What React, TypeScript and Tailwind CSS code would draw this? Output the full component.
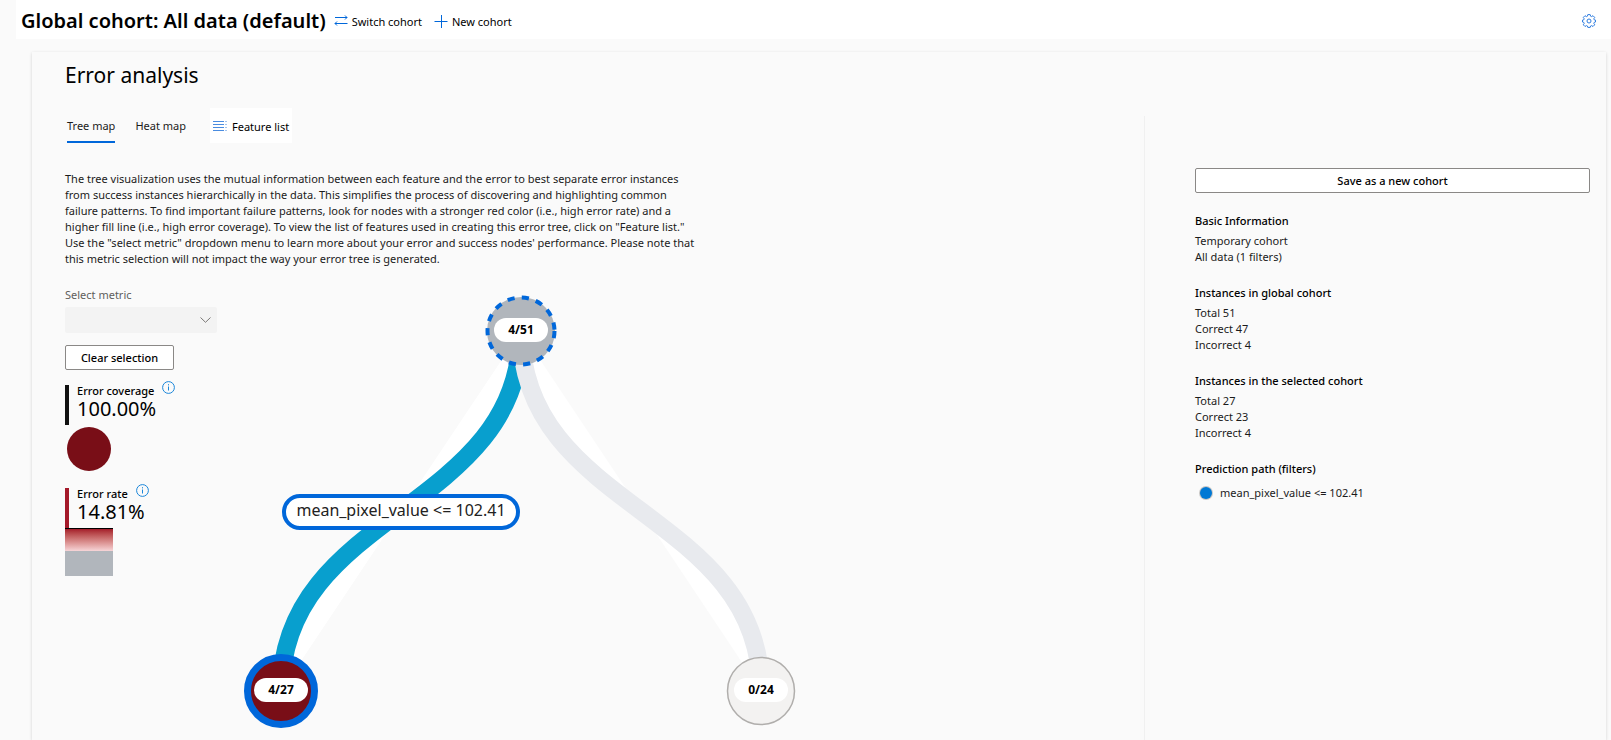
import React from "react";

type Point = { x: number; y: number };

const root: Point = { x: 300, y: 44 };
const left: Point = { x: 60, y: 404 };
const right: Point = { x: 540, y: 404 };

function linkPath(a: Point, b: Point) {
  const mid = (a.y + b.y) / 2;
  return `M${a.x},${a.y}C${a.x},${mid} ${b.x},${mid} ${b.x},${b.y}`;
}

function SwitchIcon() {
  return (
    <svg width="14" height="14" viewBox="0 0 14 14" fill="none" stroke="#0067da" aria-hidden="true">
      <path d="M1 2.5H13M11 0.5L13 2.5L11 4.5M13.5 8.5H1M3 6.5L1 8.5L3 10.5" />
    </svg>
  );
}

function PlusIcon() {
  return (
    <svg width="14" height="14" viewBox="0 0 14 14" fill="none" stroke="#0067da" aria-hidden="true">
      <path d="M0.5 6.5H13.5M7.5 0V13" />
    </svg>
  );
}

function ListIcon() {
  return (
    <svg width="14" height="12" viewBox="0 0 14 12" fill="none" stroke="#4a8ce0" aria-hidden="true">
      <path d="M0 0.5H11M0 3.5H11M0 6.5H11M0 9.5H11" />
      <path d="M12 0.5H14M12 3.5H14M12 6.5H14M12 9.5H14" strokeOpacity="0.5" />
    </svg>
  );
}

function GearIcon() {
  return (
    <svg width="14" height="14" viewBox="0 0 14 14" fill="none" stroke="#2f7de0" strokeLinejoin="round" aria-hidden="true">
      <path d="M5.8 .6h2.4l.4 1.6 1 .4 1.4-.9 1.7 1.7-.9 1.4.4 1 1.3.3v1.9l-1.3.4-.4 1 .9 1.4-1.7 1.7-1.4-.9-1 .4-.4 1.4H5.8l-.4-1.4-1-.4-1.4.9-1.7-1.7.9-1.4-.4-1L.5 8V6.1l1.3-.3.4-1-.9-1.4L3 1.7l1.4.9 1-.4z" />
      <circle cx="7" cy="7" r="2" />
    </svg>
  );
}

function InfoIcon() {
  return (
    <svg width="13" height="13" viewBox="0 0 13 13" fill="none" stroke="#1a86d9" aria-hidden="true">
      <circle cx="6.5" cy="6.5" r="5.9" />
      <path d="M6.5 5.5V9.5M6.5 3.2V4.4" />
    </svg>
  );
}

function ChevronIcon() {
  return (
    <svg width="11" height="6" viewBox="0 0 11 6" fill="none" stroke="#7a7876" aria-hidden="true">
      <path d="M0.5 0.5L5.5 5.3L10.5 0.5" />
    </svg>
  );
}

function Metric({ label, value, bar }: { label: string; value: string; bar: string }) {
  return (
    <div className={`flex h-10 items-start border-l-4 pl-2 ${bar}`}>
      <div className="-mt-0.5">
        <div className="flex h-4 items-start gap-2 font-medium text-black">
          <span>{label}</span>
          <button type="button" aria-label={`About ${label}`} className="-mt-0.5">
            <InfoIcon />
          </button>
        </div>
        <div className="text-xl leading-5 text-black">{value}</div>
      </div>
    </div>
  );
}

function Group({ title, lines }: { title: string; lines: string[] }) {
  return (
    <section className="mb-5">
      <h3 className="mb-1 font-medium text-black">{title}</h3>
      {lines.map((line) => (
        <p key={line}>{line}</p>
      ))}
    </section>
  );
}

function NodeLabel({ at, text }: { at: Point; text: string }) {
  return (
    <>
      <rect x={at.x - 27} y={at.y - 13} width="54" height="24" rx="12" fill="#fff" />
      <text x={at.x} y={at.y + 3} textAnchor="middle" className="fill-black text-xs font-bold">
        {text}
      </text>
    </>
  );
}

function ErrorTree() {
  return (
    <svg width="600" height="444" className="shrink-0" role="img" aria-label="Error tree">
      <path d={linkPath(root, left)} fill="#fff" stroke="#089fce" strokeWidth="18" />
      <path d={linkPath(root, right)} fill="#fff" stroke="#e8eaee" strokeWidth="18" />
      <circle cx={root.x} cy={root.y} r="34" fill="#b1b6bc" />
      <circle cx={root.x} cy={root.y} r="33.5" fill="none" stroke="#0067da" strokeWidth="4" strokeDasharray="7.2 7.2" />
      <NodeLabel at={root} text="4/51" />
      <circle cx={left.x} cy={left.y} r="33.5" fill="#790e17" stroke="#0067da" strokeWidth="7" />
      <NodeLabel at={left} text="4/27" />
      <circle cx={right.x} cy={right.y} r="33.5" fill="#f3f2f1" stroke="#b0aeac" strokeWidth="1.5" />
      <NodeLabel at={right} text="0/24" />
      <rect x="63" y="209" width="234" height="32" rx="16" fill="#fff" stroke="#0067da" strokeWidth="4" />
      <text x="180" y="229" textAnchor="middle" className="fill-[#222222] text-base">
        mean_pixel_value &lt;= 102.41
      </text>
    </svg>
  );
}

export default function App() {
  return (
    <div className="flex min-h-screen flex-col bg-[#fafafa] font-['Noto_Sans','Open_Sans',sans-serif] text-[11px] leading-4 text-[#1b1b1b]">
      <header className="ml-4 flex h-[39px] items-center gap-3 bg-white pt-1 pr-[15px] pl-[5px] text-black">
        <h1 className="-mr-1 pb-0.5 text-xl leading-7 font-semibold">Global cohort: All data (default)</h1>
        <button type="button" className="flex items-center gap-1">
          <SwitchIcon />
          Switch cohort
        </button>
        <button type="button" className="flex items-center gap-1">
          <PlusIcon />
          New cohort
        </button>
        <button type="button" aria-label="Settings" className="ml-auto pb-0.5">
          <GearIcon />
        </button>
      </header>

      <main className="mt-[13px] mr-[5px] ml-8 flex grow flex-col pt-[7px] pr-4 pl-[33px] shadow-[0_1px_3px_rgba(0,0,0,0.16)]">
        <h2 className="text-[21px] leading-8 text-black">Error analysis</h2>
        <div className="mt-[25px] flex grow">
          <div className="min-w-0 grow">
            <div className="-mt-2 ml-0.5 flex h-[35px] items-center" role="tablist">
              <button
                type="button"
                role="tab"
                aria-selected="true"
                className="h-full border-b-2 border-[#0067da] pt-0.5"
              >
                Tree map
              </button>
              <button type="button" role="tab" aria-selected="false" className="ml-5 h-full">
                Heat map
              </button>
              <button
                type="button"
                className="ml-6 flex h-full items-center gap-[5px] bg-white px-[3px] pt-0.5 text-black"
              >
                <ListIcon />
                Feature list
              </button>
            </div>
            <p className="mt-7">
              The tree visualization uses the mutual information between each feature and the error to best separate
              error instances
              <br />
              from success instances hierarchically in the data. This simplifies the process of discovering and
              highlighting common
              <br />
              failure patterns. To find important failure patterns, look for nodes with a stronger red color (i.e., high
              error rate) and a
              <br />
              higher fill line (i.e., high error coverage). To view the list of features used in creating this error
              tree, click on "Feature list."
              <br />
              Use the "select metric" dropdown menu to learn more about your error and success nodes' performance.
              Please note that
              <br />
              this metric selection will not impact the way your error tree is generated.
            </p>
            <div className="mt-5 flex">
              <div className="w-[156px] shrink-0">
                <label htmlFor="metric" className="block text-[#605e5c]">
                  Select metric
                </label>
                <div className="mt-1 grid w-[152px] items-center">
                  <select
                    id="metric"
                    disabled
                    className="col-start-1 row-start-1 h-[26px] w-full appearance-none rounded-xs bg-[#f3f3f3] px-2"
                  />
                  <span className="pointer-events-none col-start-1 row-start-1 mr-1.5 justify-self-end">
                    <ChevronIcon />
                  </span>
                </div>
                <button
                  type="button"
                  className="mt-3 h-[25px] w-[109px] rounded-xs border border-[#8a8886] bg-white font-medium text-black"
                >
                  Clear selection
                </button>
                <div className="mt-[15px]">
                  <Metric label="Error coverage" value="100.00%" bar="border-[#111111]" />
                  <div className="mt-0.5 ml-0.5 size-[44px] rounded-full bg-[#790e17]" />
                </div>
                <div className="mt-[17px]">
                  <Metric label="Error rate" value="14.81%" bar="border-[#a4192a]" />
                  <div className="h-[23px] w-12 border-t border-black bg-linear-to-b from-[#a4192a] to-[#f6d5d8]" />
                  <div className="h-[25px] w-12 bg-[#b1b6bc]" />
                </div>
              </div>
              <ErrorTree />
            </div>
          </div>
          <aside className="w-[446px] shrink-0 border-l border-[#f0f0f0] pt-[52px] pl-[50px]">
            <button
              type="button"
              className="mb-5 h-[25px] w-full rounded-xs border border-[#8a8886] bg-white font-medium text-black"
            >
              Save as a new cohort
            </button>
            <Group title="Basic Information" lines={["Temporary cohort", "All data (1 filters)"]} />
            <Group title="Instances in global cohort" lines={["Total 51", "Correct 47", "Incorrect 4"]} />
            <Group title="Instances in the selected cohort" lines={["Total 27", "Correct 23", "Incorrect 4"]} />
            <section>
              <h3 className="font-medium text-black">Prediction path (filters)</h3>
              <p className="mt-2 ml-[5px] flex items-center gap-2">
                <span className="size-3 rounded-full bg-[#0078d4] ring-1 ring-[#c8c6c4]" />
                mean_pixel_value &lt;= 102.41
              </p>
            </section>
          </aside>
        </div>
      </main>
    </div>
  );
}
